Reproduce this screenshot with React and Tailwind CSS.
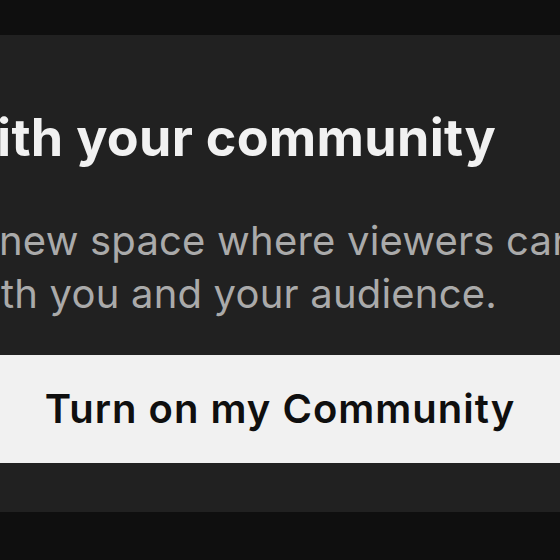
export default function App() {
  return (
    <div className="w-[560px] h-[560px] overflow-hidden bg-[#0f0f0f] flex flex-col" style={{ fontFamily: "Inter, 'Noto Sans', sans-serif" }}>
      <div className="h-[35px] shrink-0" />
      <div className="h-[477px] shrink-0 bg-[#212121] flex flex-col overflow-hidden">
        <div className="mt-[71px] ml-[-3px] whitespace-nowrap text-[52px] leading-[64px] font-bold tracking-[0.3px] text-[#f1f1f1]">
          ith your community
        </div>
        <div className="mt-[44px] ml-[-1px] whitespace-nowrap text-[40px] leading-[53px] text-[#aaaaaa] tracking-[0.2px]">
          <div>new space where viewers can</div>
          <div className="ml-[2px]">th you and your audience.</div>
        </div>
        <div className="mt-[35px] h-[108px] bg-[#f1f1f1] flex items-center justify-center whitespace-nowrap text-[40px] font-semibold tracking-[1px] text-[#0f0f0f]">
          Turn on my Community
        </div>
      </div>
    </div>
  );
}
